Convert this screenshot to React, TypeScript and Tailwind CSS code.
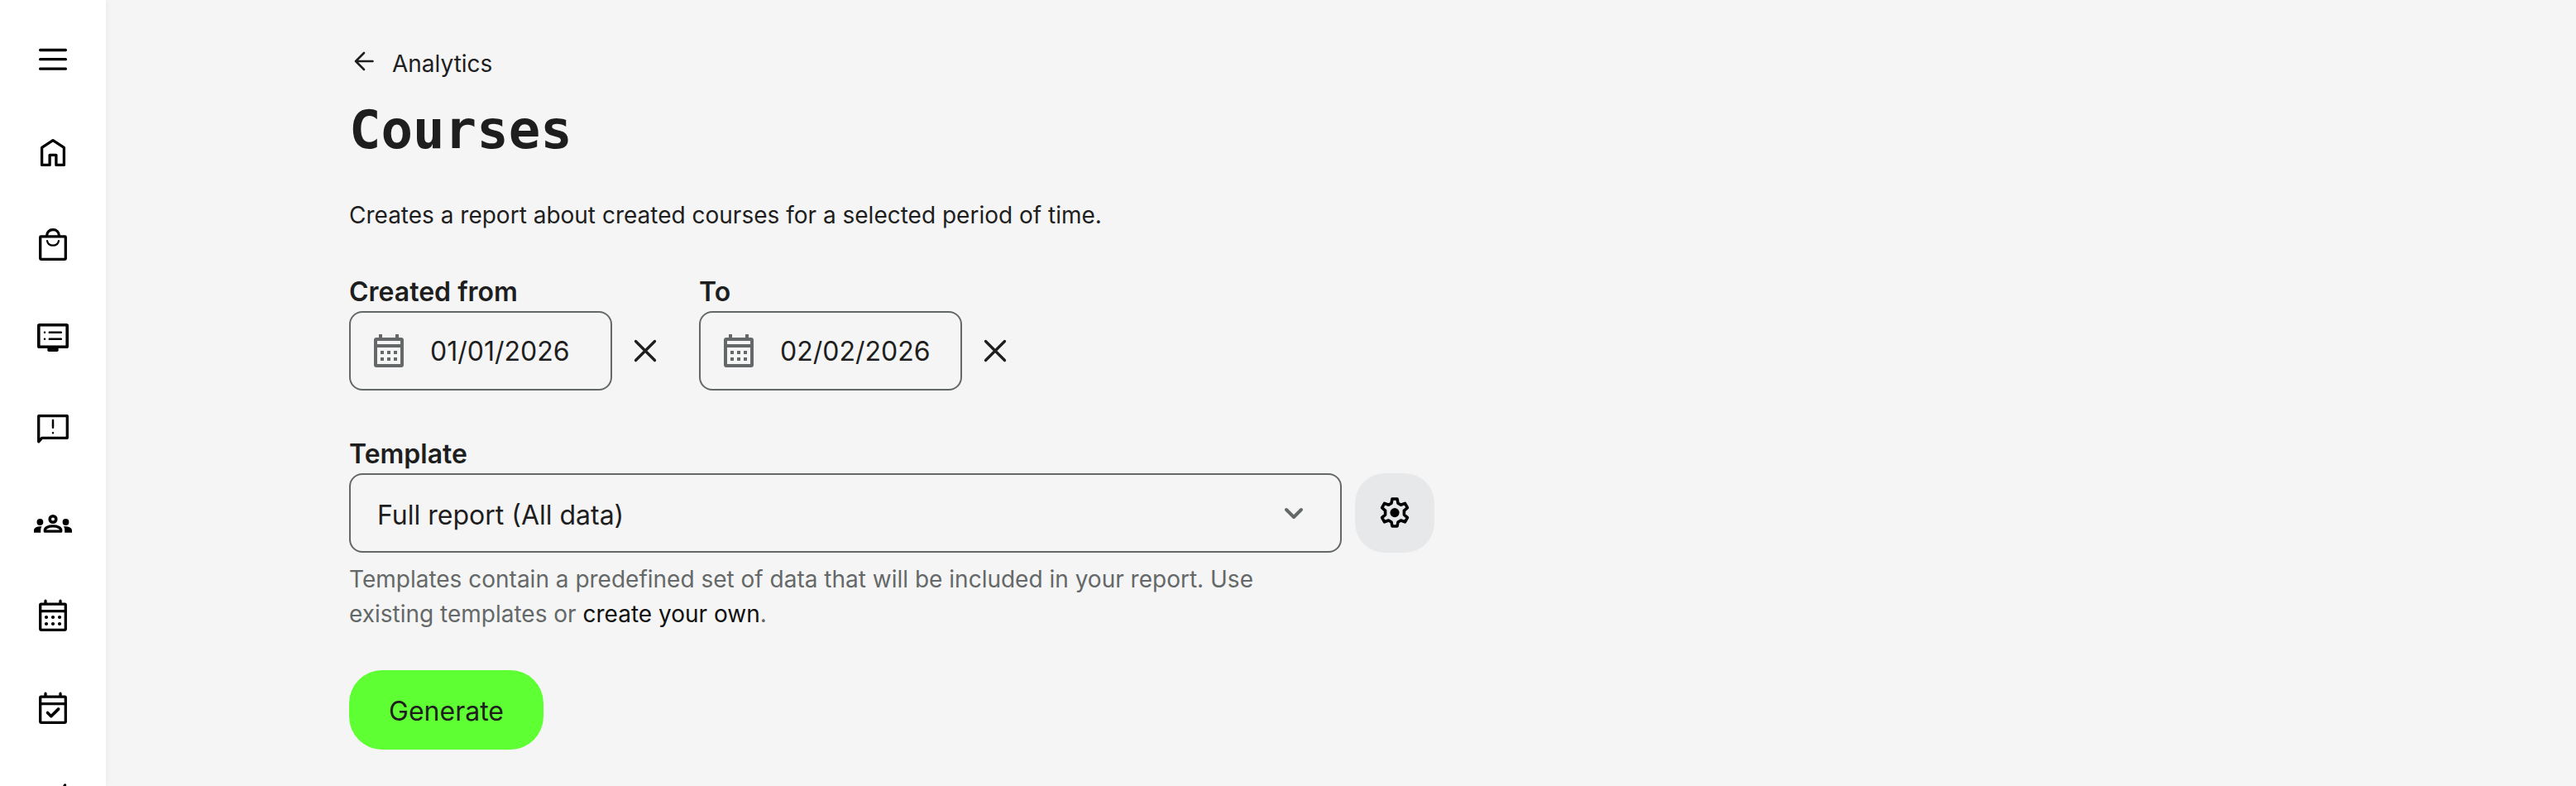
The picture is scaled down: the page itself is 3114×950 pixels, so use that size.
import React from 'react';

const iconProps = {
    viewBox: '0 0 48 48',
    fill: 'none',
    stroke: 'currentColor',
    strokeWidth: 3.3,
    strokeLinecap: 'round' as const,
    strokeLinejoin: 'round' as const,
    className: 'size-12 shrink-0',
};

const MenuIcon = () => (
    <svg {...iconProps}>
        <path d="M8.6 12.5h30.800M8.600 23.700h30.800M8.600 35.200h30.800" />
    </svg>
);

const HomeIcon = () => (
    <svg {...iconProps}>
        <path d="M10.6 39.4V18.3L24 9.6l13.4 8.7v21.1h-9.5V27.3h-7.8v12.1z" />
    </svg>
);

const BagIcon = () => (
    <svg {...iconProps}>
        <rect x="8.7" y="13.9" width="30.6" height="27.4" rx="0.8" />
        <path d="M16.6 13c0-4.500 3.200-7.300 7.400-7.300s7.400 2.800 7.400 7.300" />
        <path d="M17 19c.6 3.400 3.400 5.700 7 5.700s6.400-2.300 7-5.700" strokeWidth={2.2} />
    </svg>
);

const ScreenIcon = () => (
    <svg {...iconProps}>
        <rect x="6.8" y="8.8" width="34.4" height="26.4" rx="0.8" strokeWidth={3.6} />
        <path d="M19 36h10v3.300H19z" fill="currentColor" />
        <path d="M19.800 17.700h14M19.800 25.700h14M14 17.700h.01M14 25.700h.01" strokeWidth={2.5} />
    </svg>
);

const FeedbackIcon = () => (
    <svg {...iconProps}>
        <path d="M6.700 37.800V6.700h34.600v26.600H10.700z" />
        <path d="M24 12v8.700M24 27.300h.01" strokeWidth={2.5} />
    </svg>
);

const GroupsIcon = () => (
    <svg {...iconProps}>
        <circle cx="24" cy="19.500" r="3.800" strokeWidth={3.6} />
        <path d="M14.300 34.200v-1.400c0-3 4.300-4.900 9.700-4.900s9.700 1.900 9.700 4.900v1.400z" />
        <g fill="currentColor" stroke="none">
            <circle cx="8.400" cy="23" r="3.900" />
            <circle cx="39.500" cy="23" r="3.900" />
            <path d="M1 35.800v-2.600c0-3.300 3.800-5.200 9.500-4.900-.9 1.300-1.300 2.700-1.300 4.200v3.300zM47 35.800v-2.600c0-3.300-4.200-5.200-10.100-4.900.9 1.300 1.300 2.700 1.300 4.200v3.300z" />
        </g>
    </svg>
);

const CalendarIcon = () => (
    <svg {...iconProps}>
        <rect x="8.700" y="10.200" width="30.600" height="31.100" rx="0.800" />
        <path d="M15 6.200v3.300M33 6.200v3.300M9 18.700h30" />
        <path d="M16 26h.01M24 26h.01M32 26h.01M16 34h.01M24 34h.01M32 34h.01" strokeWidth={4.2} />
    </svg>
);

const EventIcon = () => (
    <svg {...iconProps}>
        <rect x="8.700" y="10.200" width="30.600" height="31.100" rx="0.800" />
        <path d="M15 6.200v3.300M33 6.200v3.300M9 18.700h30" />
        <path d="M17.500 29.500l4.300 4.200 8.900-8.800" strokeWidth={3.6} />
    </svg>
);

const ChartIcon = () => (
    <svg {...iconProps}>
        <path d="M8.500 31l9.500-9 7 6L38.500 5" />
    </svg>
);

const DateIcon = () => (
    <svg viewBox="0 0 48 48" fill="currentColor" className="size-12 shrink-0 text-[#646868]">
        <path
            fillRule="evenodd"
            d="M12 4h4v4h16V4h4v4h3a3 3 0 0 1 3 3v30a3 3 0 0 1-3 3H9a3 3 0 0 1-3-3V11a3 3 0 0 1 3-3h3zM10 12v4h28v-4zM10 20v20h28V20zM14 24h4v4h-4zM22 24h4v4h-4zM30 24h4v4h-4zM14 32h4v4h-4zM22 32h4v4h-4zM30 32h4v4h-4z"
        />
    </svg>
);

const GearIcon = () => (
    <svg {...iconProps} strokeWidth={3.600}>
        <path d="M21 7h6l1 5.200 3.400 2 5-1.800 3 5.200-4 3.500v5l4 3.500-3 5.200-5-1.800-3.400 2L27 40h-6l-1-5-3.400-2-5 1.800-3-5.200 4-3.500v-5l-4-3.500 3-5.200 5 1.800 3.400-2z" />
        <circle cx="24" cy="23.600" r="5.600" fill="currentColor" stroke="none" />
    </svg>
);

const navItems = [MenuIcon, HomeIcon, BagIcon, ScreenIcon, FeedbackIcon, GroupsIcon, CalendarIcon, EventIcon, ChartIcon];

interface DateFieldProps {
    label: string;
    value: string;
}

const DateField: React.FC<DateFieldProps> = ({ label, value }) => (
    <div className="w-[423px]">
        <div className="h-10 text-[32px] leading-[34px] font-semibold">{label}</div>
        <div className="flex items-center">
            <div className="flex h-24 w-[318px] items-center rounded-2xl border-2 border-[#646868] pl-[22px]">
                <DateIcon />
                <span className="ml-[26px] pt-px text-[32px]">{value}</span>
            </div>
            <button className="ml-4">
                <svg {...iconProps}>
                    <path d="M12.500 12.500l23 23M35.500 12.500l-23 23" />
                </svg>
            </button>
        </div>
    </div>
);

const App: React.FC = () => (
    <div className="flex h-[950px] w-full overflow-hidden bg-[#f5f5f5] font-['Inter',sans-serif] text-[#1e1e1e]">
        <nav className="flex w-32 shrink-0 flex-col items-center gap-16 bg-white pt-12 text-black shadow-[0_0_8px_rgba(0,0,0,0.06)]">
            {navItems.map((Icon, i) => <Icon key={i} />)}
        </nav>

        <main className="flex-1 pl-[294px] pt-[50px]">
            <a className="flex h-12 items-center text-[28px] leading-[48px]">
                <svg {...iconProps} strokeWidth={2.6} className="ml-[-6px] size-12 shrink-0">
                    <path d="M34.500 24H14M24 14L14 24l10 10" />
                </svg>
                <span className="ml-[10px] pt-[5px]">Analytics</span>
            </a>

            <h1 className="mt-[19px] h-20 font-['DejaVu_Sans_Mono',monospace] text-[64px] leading-[80px] font-bold">Courses</h1>
            <p className="mt-[42px] h-[42px] text-[28px] leading-[42px]">Creates a report about created courses for a selected period of time.</p>

            <div className="mt-[55px] flex">
                <DateField label="Created from" value="01/01/2026" />
                <DateField label="To" value="02/02/2026" />
            </div>

            <div className="mt-[60px] h-10 text-[32px] leading-[34px] font-semibold">Template</div>
            <div className="flex gap-4">
                <div className="flex h-24 w-[1200px] items-center justify-between rounded-2xl border-2 border-[#646868] pr-8 pl-8 text-[32px]">
                    <span className="pt-[5px]">Full report (All data)</span>
                    <svg {...iconProps} strokeWidth={4} className="size-12 text-[#646868]">
                        <path d="M15 20l9 9 9-9" />
                    </svg>
                </div>
                <button className="flex size-24 items-center justify-center rounded-[36px] bg-[#e7e8ea] text-black">
                    <GearIcon />
                </button>
            </div>
            <p className="mt-[11px] w-[1200px] text-[28px] leading-[42px] text-[#646868]">
                Templates contain a predefined set of data that will be included in your report. Use<br />
                existing templates or <a className="text-[#111111]">create your own</a>.
            </p>

            <button className="mt-[47px] flex h-24 w-[235px] items-center justify-center rounded-[40px] bg-[#5eff33] pt-[3px] text-[32px]">Generate</button>
        </main>
    </div>
);

export default App;
